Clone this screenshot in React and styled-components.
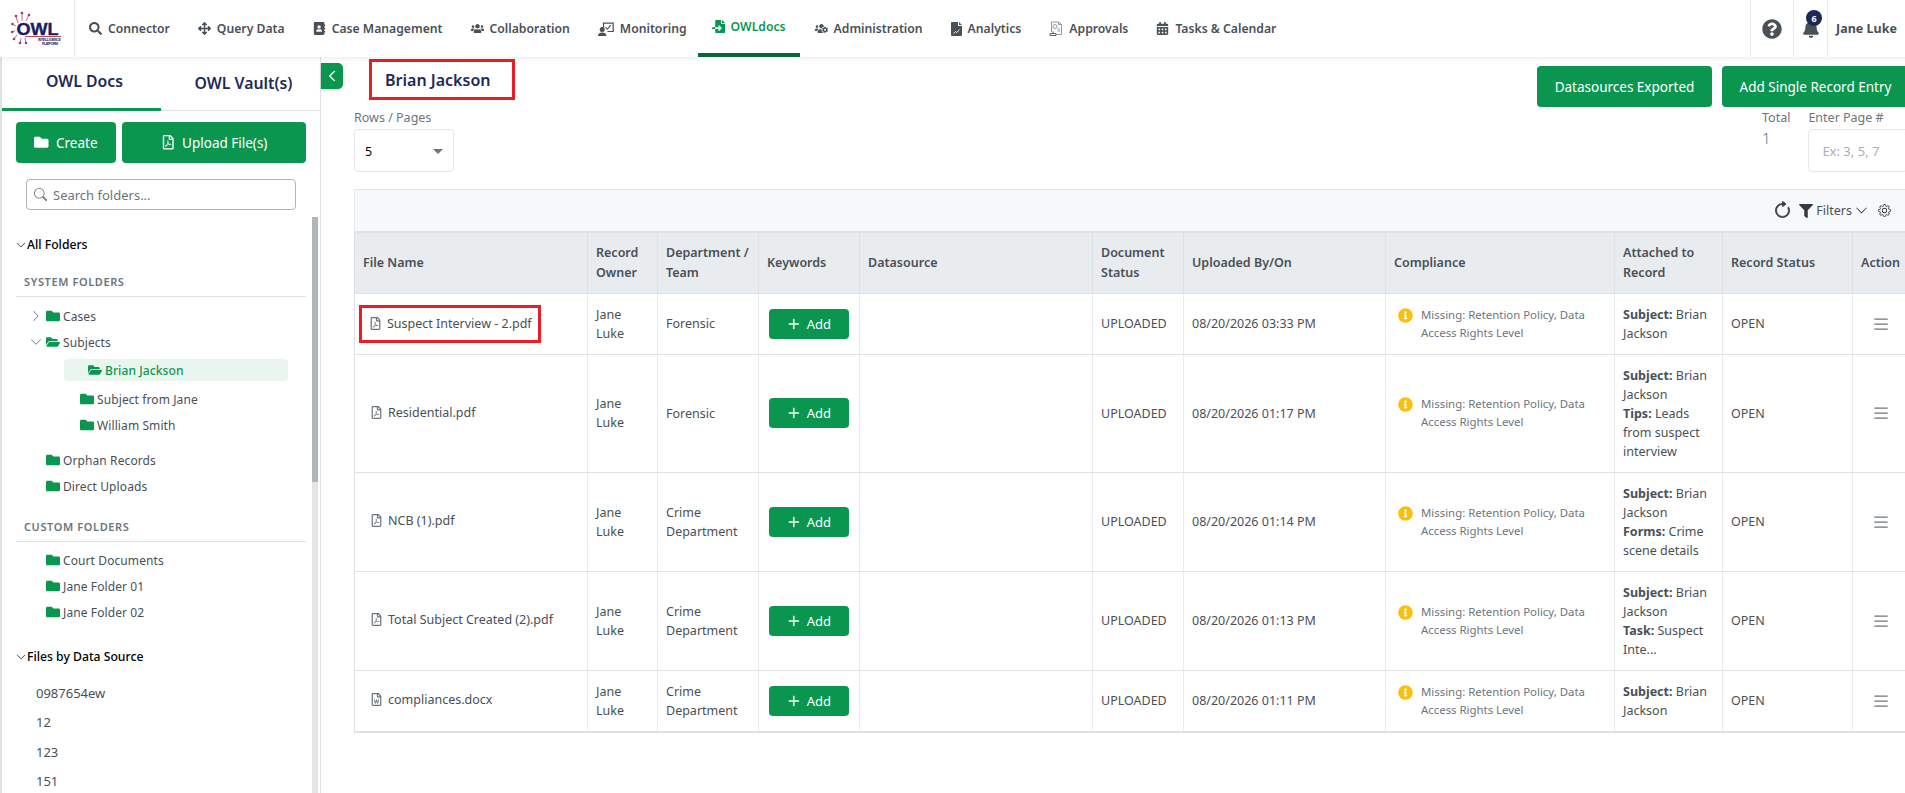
import React from 'react';
import styled, { createGlobalStyle } from 'styled-components';
import {
  FaAddressBook,
  FaArrowsAlt,
  FaBell,
  FaCalendarAlt,
  FaFileImport,
  FaFilter,
  FaFolder,
  FaFolderOpen,
  FaInfoCircle,
  FaQuestionCircle,
  FaRegFilePdf,
  FaRegFileWord,
  FaSearch,
  FaUsers,
  FaUsersCog,
} from 'react-icons/fa';
import { BsArrowClockwise, BsChevronDown, BsChevronLeft, BsChevronRight, BsGear, BsList, BsPlusLg, BsSearch } from 'react-icons/bs';

const GREEN = '#0b9650';
const NAVY = '#1c2a5a';
const FONT = '"Noto Sans", "Open Sans", sans-serif';

const GlobalStyle = createGlobalStyle`
  html, body {
    margin: 0;
    padding: 0;
    height: 100%;
    overflow: hidden;
    background: #fff;
  }
  body {
    font-family: ${FONT};
    font-size: 13px;
    color: #495057;
  }
  * { box-sizing: border-box; }
`;

const Page = styled.div`
  width: 1909px;
  height: 793px;
  display: flex;
  flex-direction: column;
  overflow: hidden;
`;

const Header = styled.header`
  height: 57px;
  flex: none;
  display: flex;
  align-items: stretch;
  background: #fff;
  box-shadow: 0 2px 6px rgba(0, 0, 0, 0.07);
  position: relative;
  z-index: 2;
  padding-right: 4px;
`;

const LogoCell = styled.div`
  width: 75px;
  flex: none;
  border-right: 1px solid #e9ebee;
  display: flex;
  align-items: center;
  justify-content: center;
`;

const Nav = styled.nav`
  flex: 1;
  display: flex;
`;

const NavItem = styled.a`
  display: flex;
  align-items: center;
  gap: 6px;
  padding: ${(p) => (p.$active ? '0 14px 0' : '4px 14px 0')};
  margin: ${(p) => (p.$active ? '0 1px 0 -3px' : '0')};
  font-size: 12.2px;
  font-weight: 600;
  white-space: nowrap;
  color: ${(p) => (p.$active ? GREEN : '#495057')};
  border-bottom: 4px solid ${(p) => (p.$active ? '#08663a' : 'transparent')};
  svg {
    font-size: 13px;
    flex: none;
  }
`;

const HeaderCell = styled.div`
  border-left: 1px solid #e9ebee;
  display: flex;
  align-items: center;
  justify-content: center;
  width: ${(p) => p.$w}px;
  position: relative;
  color: #495057;
  font-size: 12.5px;
  font-weight: 700;
  white-space: nowrap;
`;

const Badge = styled.span`
  position: absolute;
  left: 12px;
  top: 10px;
  width: 16px;
  height: 16px;
  border-radius: 50%;
  background: ${NAVY};
  color: #fff;
  font-size: 9px;
  font-weight: 700;
  display: flex;
  align-items: center;
  justify-content: center;
`;

const Body = styled.div`
  flex: 1;
  min-height: 0;
  display: flex;
`;

const Sidebar = styled.aside`
  width: 321px;
  flex: none;
  display: flex;
  flex-direction: column;
  border-left: 2px solid #dee2e6;
  border-right: 1px solid #dee2e6;
  overflow: hidden;
`;

const Tabs = styled.div`
  height: 54px;
  flex: none;
  display: flex;
  border-bottom: 1px solid #dee2e6;
`;

const Tab = styled.div`
  flex: 1;
  display: flex;
  align-items: center;
  justify-content: center;
  font-size: 15.8px;
  font-weight: 600;
  color: ${NAVY};
  border-bottom: ${(p) => (p.$active ? `3px solid ${GREEN}` : 'none')};
  margin-bottom: -1px;
  padding: 0 0 3px 6px;
`;

const SideActions = styled.div`
  display: flex;
  gap: 6px;
  padding: 11px 14px 0;
`;

const GreenButton = styled.button`
  border: none;
  border-radius: 4px;
  background: ${GREEN};
  color: #fff;
  font-family: ${FONT};
  font-size: 13.5px;
  display: flex;
  align-items: center;
  justify-content: center;
  gap: 7px;
  height: ${(p) => p.$h || 41}px;
  width: ${(p) => (p.$w ? `${p.$w}px` : 'auto')};
  padding: ${(p) => (p.$w ? '0' : '0 18px')};
  flex: none;
  white-space: nowrap;
  svg { font-size: 14.5px; }
`;

const SearchWrap = styled.div`
  margin: 16px 0 0 24px;
  width: 270px;
  height: 31px;
  flex: none;
  border: 1px solid #adb5bd;
  border-radius: 4px;
  display: flex;
  align-items: center;
  gap: 6px;
  padding-left: 7px;
  font-size: 13px;
  color: #6c757d;
`;

const SideScroll = styled.div`
  flex: 1;
  min-height: 0;
  display: flex;
  margin-top: 7px;
`;

const SideTree = styled.div`
  flex: 1;
  padding: 18px 6px 0 14px;
  overflow: hidden;
`;

const ScrollTrack = styled.div`
  width: 6px;
  flex: none;
  margin-right: 2px;
  background: #e4e6e6;
`;

const ScrollThumb = styled.div`
  height: 265px;
  background: #adb5bd;
`;

const TreeHeading = styled.div`
  display: flex;
  align-items: center;
  gap: 1px;
  height: 19px;
  margin-top: ${(p) => p.$mt || 0}px;
  font-size: 12.2px;
  font-weight: 500;
  color: #000;
  svg { font-size: 10px; }
`;

const SectionLabel = styled.div`
  margin-top: ${(p) => p.$mt}px;
  padding: 0 0 7px 8px;
  border-bottom: 1px solid #dee2e6;
  font-size: 11px;
  font-weight: 600;
  letter-spacing: 0.6px;
  color: #6c757d;
`;

const TreeRow = styled.div`
  display: flex;
  align-items: center;
  height: ${(p) => p.$h || 26}px;
  margin-left: ${(p) => p.$indent}px;
  margin-top: ${(p) => p.$mt || 0}px;
  font-size: 12px;
  letter-spacing: 0.1px;
  color: #495057;
  gap: 3px;
  svg.folder { color: ${GREEN}; font-size: 14px; flex: none; }
`;

const Caret = styled.span`
  width: 14px;
  margin-left: -17px;
  display: flex;
  justify-content: center;
  color: #6c757d;
  font-size: 12px;
`;

const SelectedRow = styled.div`
  display: flex;
  align-items: center;
  gap: 3px;
  height: 22px;
  margin: 4px 18px 5px 48px;
  padding-left: 24px;
  border-radius: 4px;
  background: #ebf5ef;
  color: ${GREEN};
  font-size: 12px;
  font-weight: 500;
  letter-spacing: 0.1px;
  svg { font-size: 14px; }
`;

const SourceList = styled.div`
  margin-top: 12px;
`;

const SourceRow = styled.div`
  height: 29.5px;
  display: flex;
  align-items: center;
  padding-left: 20px;
  font-size: 13px;
  color: #495057;
`;

const Main = styled.main`
  flex: 1;
  min-width: 0;
  position: relative;
  padding-left: 33px;
`;

const CollapseTab = styled.div`
  position: absolute;
  left: 0;
  top: 6px;
  width: 22px;
  height: 26px;
  border-radius: 0 5px 5px 0;
  background: ${GREEN};
  color: #fff;
  box-shadow: 0 1px 3px rgba(0, 0, 0, 0.2);
  display: flex;
  align-items: center;
  justify-content: center;
  font-size: 12px;
  svg { stroke: #fff; stroke-width: 1.2px; }
`;

const TopRow = styled.div`
  display: flex;
  justify-content: space-between;
  align-items: flex-start;
  padding-top: 2px;
`;

const TitleBox = styled.div`
  margin-left: 15px;
  width: 146px;
  height: 41px;
  border: 3px solid #ed1c24;
  display: flex;
  align-items: center;
  padding-left: 13px;
  font-size: 16px;
  font-weight: 600;
  color: ${NAVY};
`;

const TopActions = styled.div`
  display: flex;
  gap: 10px;
  margin-top: 7px;
`;

const ControlsRow = styled.div`
  display: flex;
  margin-top: 1px;
`;

const Field = styled.div`
  display: flex;
  flex-direction: column;
  margin-left: ${(p) => p.$ml || 0}px;
  font-size: 12.5px;
  color: #6c757d;
`;

const FieldLabel = styled.label`
  height: 19px;
  margin-bottom: 2px;
  line-height: 19px;
`;

const SelectBox = styled.div`
  width: 100px;
  height: 43px;
  border: 1px solid #e4e6ea;
  border-radius: 4px;
  display: flex;
  align-items: center;
  justify-content: space-between;
  padding: 2px 10px 0;
  color: #000;
  font-size: 12.5px;
`;

const SelectArrow = styled.span`
  width: 0;
  height: 0;
  border-left: 5px solid transparent;
  border-right: 5px solid transparent;
  border-top: 5px solid #6c757d;
`;

const TotalValue = styled.div`
  font-size: 15px;
  font-weight: 300;
  color: #4a7ba6;
  line-height: 19px;
`;

const PageInput = styled.div`
  width: 100px;
  height: 43px;
  border: 1px solid #e4e6ea;
  border-radius: 4px;
  display: flex;
  align-items: center;
  padding-left: 13px;
  color: #a9afb5;
  font-size: 13px;
  white-space: nowrap;
`;

const Toolbar = styled.div`
  margin-top: 17px;
  height: 42px;
  background: #f7f8fa;
  border-top: 1px solid #dee2e6;
  border-left: 1px solid #e9ebee;
  display: flex;
  align-items: center;
  justify-content: flex-end;
  padding-right: 18px;
  font-size: 12.5px;
  color: #495057;
`;

const ToolIcon = styled.span`
  display: flex;
  margin-left: ${(p) => p.$ml || 0}px;
  font-size: ${(p) => p.$size}px;
  color: #343a40;
  svg { stroke: currentColor; stroke-width: ${(p) => p.$bold || 0}px; }
`;

const FilterLabel = styled.span`
  margin-left: 3px;
`;

const Table = styled.table`
  width: 1555px;
  table-layout: fixed;
  border-collapse: collapse;
  border-top: 2px solid #dee2e6;
  border-bottom: 2px solid #dee2e6;
  border-left: 1px solid #dee2e6;
`;

const Th = styled.th`
  height: 61px;
  padding: 0 8px;
  background: #e9ecef;
  border-right: 1px solid #dee2e6;
  border-bottom: 1px solid #dee2e6;
  text-align: left;
  font-size: 12.5px;
  font-weight: 600;
  line-height: 20px;
  color: #495057;
`;

const Td = styled.td`
  padding: 11px 8px;
  border-right: 1px solid #e9ebee;
  border-bottom: 1px solid #dee2e6;
  font-size: 12.5px;
  line-height: 19px;
  color: #495057;
  vertical-align: middle;
`;

const ActionCell = styled(Td)`
  text-align: center;
  font-size: 20px;
  padding: 0;
  color: #6c757d;
  svg { display: block; margin: 0 auto; }
`;

const FileCell = styled.div`
  display: inline-flex;
  align-items: center;
  gap: 5px;
  height: ${(p) => (p.$marked ? '38px' : 'auto')};
  width: ${(p) => (p.$marked ? '182px' : 'auto')};
  margin-left: ${(p) => (p.$marked ? '-4px' : '0')};
  padding-left: ${(p) => (p.$marked ? '10px' : '7px')};
  outline: ${(p) => (p.$marked ? '3px solid #ed1c24' : 'none')};
  outline-offset: -3px;
  white-space: nowrap;
  svg { color: #6c757d; font-size: 13px; flex: none; }
`;

const AddButton = styled(GreenButton)`
  width: 80px;
  height: 30px;
  margin-left: 2px;
  gap: 6px;
  font-size: 13px;
  svg { font-size: 16px; stroke: #fff; stroke-width: 0.6px; }
`;

const ComplianceCell = styled.div`
  display: flex;
  gap: 8px;
  padding-left: 4px;
  font-size: 11.4px;
  line-height: 18px;
  color: #6c757d;
  svg { color: #f9bf0a; font-size: 15px; flex: none; margin-top: 2px; }
`;

const Strong = styled.b`
  font-weight: 700;
`;

const COLUMNS = [
  ['File Name', 233],
  ['Record Owner', 70],
  ['Department / Team', 101],
  ['Keywords', 101],
  ['Datasource', 233],
  ['Document Status', 91],
  ['Uploaded By/On', 202],
  ['Compliance', 229],
  ['Attached to Record', 108],
  ['Record Status', 130],
  ['Action', 57],
];

const ROWS = [
  { file: 'Suspect Interview - 2.pdf', dept: 'Forensic', time: '03:33 PM', marked: true, attached: null },
  { file: 'Residential.pdf', dept: 'Forensic', time: '01:17 PM', attached: ['Tips:', ' Leads from suspect interview'] },
  { file: 'NCB (1).pdf', dept: 'Crime Department', time: '01:14 PM', attached: ['Forms:', ' Crime scene details'] },
  { file: 'Total Subject Created (2).pdf', dept: 'Crime Department', time: '01:13 PM', attached: ['Task:', ' Suspect Inte...'] },
  { file: 'compliances.docx', dept: 'Crime Department', time: '01:11 PM', word: true, attached: null },
];

const OwlLogo = () => (
  <svg width="52" height="38" viewBox="0 0 52 38">
    <g stroke="#b8456b" strokeWidth="0.8" fill="none">
      <path d="M7 13 L5 7 M11 11 L11 3 M15 11 L18 5 M5 16 L1 14 M4 21 L0 22 M6 25 L3 29 M10 28 L9 33 M14 28 L15 33" />
    </g>
    <g fill="#a8327a">
      <circle cx="5" cy="6" r="1.3" />
      <circle cx="11" cy="3" r="1.3" />
      <circle cx="18" cy="5" r="1.3" />
      <circle cx="1.5" cy="14" r="1.3" />
      <circle cx="1.2" cy="22" r="1.3" />
      <circle cx="3" cy="29" r="1.3" />
      <circle cx="9" cy="33" r="1.3" />
      <circle cx="15" cy="33" r="1.3" />
    </g>
    <text x="5.5" y="24.5" fontFamily='"Liberation Sans", sans-serif' fontWeight="700" fontSize="16.5" fill="#1c1f5e" stroke="#1c1f5e" strokeWidth="0.4" textLength="42" lengthAdjust="spacingAndGlyphs">OWL</text>
    <path d="M14 26.5 H50" stroke="#c2455e" strokeWidth="1" />
    <text x="27" y="31" fontFamily='"Liberation Sans", sans-serif' fontSize="3.6" fontWeight="700" fill="#1c1f5e" textLength="23">INTELLIGENCE</text>
    <text x="31" y="35" fontFamily='"Liberation Sans", sans-serif' fontSize="3.6" fontWeight="700" fill="#1c1f5e" textLength="16">PLATFORM</text>
  </svg>
);

const MonitoringIcon = () => (
  <svg width="16" height="14" viewBox="0 0 16 14">
    <path d="M5.5 6.5 V1.2 H15.2 V9.5 H9.5" fill="none" stroke="currentColor" strokeWidth="1.2" />
    <path d="M7.5 5.5 L9.5 7 L12.8 3.2" fill="none" stroke="currentColor" strokeWidth="1.1" />
    <circle cx="4.2" cy="7.6" r="2.5" fill="currentColor" />
    <path d="M0 14 C0 11.4 1.8 10.4 4.2 10.4 C6.6 10.4 8.4 11.4 8.4 14 Z" fill="currentColor" />
  </svg>
);

const AnalyticsIcon = () => (
  <svg width="11" height="14" viewBox="0 0 11 14">
    <path d="M1 0 H7 V4 H11 V13 A1 1 0 0 1 10 14 H1 A1 1 0 0 1 0 13 V1 A1 1 0 0 1 1 0 Z M8 0 L11 3 H8 Z" fill="currentColor" />
    <path d="M2.5 11.5 L4.5 9.5 L5.8 10.6 L8.4 7.6" fill="none" stroke="#fff" strokeWidth="0.9" />
  </svg>
);

const ApprovalsIcon = () => (
  <svg width="14" height="15" viewBox="0 0 14 15" fill="none" stroke="#868e96" strokeWidth="0.9">
    <path d="M2.5 11 V1 H9.5 L12.5 3.5 V13.5 H7" />
    <circle cx="6" cy="5.5" r="2" />
    <path d="M8.5 8 H11 M8.5 10 H11 M9.5 1 V3.5 H12.5" />
    <path d="M1 14.5 V12.5 H7 V14.5 Z M4 10.5 V12.5" stroke="#495057" />
  </svg>
);

const NAV = [
  [FaSearch, 'Connector'],
  [FaArrowsAlt, 'Query Data'],
  [FaAddressBook, 'Case Management'],
  [FaUsers, 'Collaboration'],
  [MonitoringIcon, 'Monitoring'],
  [FaFileImport, 'OWLdocs', true],
  [FaUsersCog, 'Administration'],
  [AnalyticsIcon, 'Analytics'],
  [ApprovalsIcon, 'Approvals'],
  [FaCalendarAlt, 'Tasks & Calendar'],
];

const App = () => (
  <Page>
    <GlobalStyle />
    <Header>
      <LogoCell>
        <OwlLogo />
      </LogoCell>
      <Nav>
        {NAV.map(([Icon, label, active]) => (
          <NavItem key={label} $active={active}>
            <Icon />
            {label}
          </NavItem>
        ))}
      </Nav>
      <HeaderCell $w={43}>
        <FaQuestionCircle size={20} />
      </HeaderCell>
      <HeaderCell $w={34}>
        <FaBell size={18} />
        <Badge>6</Badge>
      </HeaderCell>
      <HeaderCell $w={78}>Jane Luke</HeaderCell>
    </Header>
    <Body>
      <Sidebar>
        <Tabs>
          <Tab $active>OWL Docs</Tab>
          <Tab>OWL Vault(s)</Tab>
        </Tabs>
        <SideActions>
          <GreenButton $w={100}>
            <FaFolder />
            Create
          </GreenButton>
          <GreenButton $w={184}>
            <FaRegFilePdf />
            Upload File(s)
          </GreenButton>
        </SideActions>
        <SearchWrap>
          <BsSearch size={13} />
          Search folders...
        </SearchWrap>
        <SideScroll>
          <SideTree>
            <TreeHeading>
              <BsChevronDown />
              All Folders
            </TreeHeading>
            <SectionLabel $mt={20}>SYSTEM FOLDERS</SectionLabel>
            <TreeRow $indent={30} $mt={6}>
              <Caret><BsChevronRight /></Caret>
              <FaFolder className="folder" />
              Cases
            </TreeRow>
            <TreeRow $indent={30}>
              <Caret><BsChevronDown /></Caret>
              <FaFolderOpen className="folder" />
              Subjects
            </TreeRow>
            <SelectedRow>
              <FaFolderOpen />
              Brian Jackson
            </SelectedRow>
            <TreeRow $indent={64}>
              <FaFolder className="folder" />
              Subject from Jane
            </TreeRow>
            <TreeRow $indent={64}>
              <FaFolder className="folder" />
              William Smith
            </TreeRow>
            <TreeRow $indent={30} $mt={9}>
              <FaFolder className="folder" />
              Orphan Records
            </TreeRow>
            <TreeRow $indent={30}>
              <FaFolder className="folder" />
              Direct Uploads
            </TreeRow>
            <SectionLabel $mt={20}>CUSTOM FOLDERS</SectionLabel>
            <TreeRow $indent={30} $mt={5}>
              <FaFolder className="folder" />
              Court Documents
            </TreeRow>
            <TreeRow $indent={30}>
              <FaFolder className="folder" />
              Jane Folder 01
            </TreeRow>
            <TreeRow $indent={30}>
              <FaFolder className="folder" />
              Jane Folder 02
            </TreeRow>
            <TreeHeading $mt={22}>
              <BsChevronDown />
              Files by Data Source
            </TreeHeading>
            <SourceList>
              <SourceRow>0987654ew</SourceRow>
              <SourceRow>12</SourceRow>
              <SourceRow>123</SourceRow>
              <SourceRow>151</SourceRow>
            </SourceList>
          </SideTree>
          <ScrollTrack>
            <ScrollThumb />
          </ScrollTrack>
        </SideScroll>
      </Sidebar>
      <Main>
        <CollapseTab>
          <BsChevronLeft />
        </CollapseTab>
        <TopRow>
          <TitleBox>Brian Jackson</TitleBox>
          <TopActions>
            <GreenButton $w={175}>Datasources Exported</GreenButton>
            <GreenButton $w={187}>Add Single Record Entry</GreenButton>
          </TopActions>
        </TopRow>
        <ControlsRow>
          <Field>
            <FieldLabel>Rows / Pages</FieldLabel>
            <SelectBox>
              5
              <SelectArrow />
            </SelectBox>
          </Field>
          <Field $ml={1308}>
            <FieldLabel>Total</FieldLabel>
            <TotalValue>1</TotalValue>
          </Field>
          <Field $ml={18}>
            <FieldLabel>Enter Page #</FieldLabel>
            <PageInput>Ex: 3, 5, 7</PageInput>
          </Field>
        </ControlsRow>
        <Toolbar>
          <ToolIcon $size={19} $bold={0.6}><BsArrowClockwise /></ToolIcon>
          <ToolIcon $size={14} $ml={7}><FaFilter /></ToolIcon>
          <FilterLabel>Filters</FilterLabel>
          <ToolIcon $size={13} $ml={3}><BsChevronDown /></ToolIcon>
          <ToolIcon $size={13} $ml={10}><BsGear /></ToolIcon>
        </Toolbar>
        <Table>
          <colgroup>
            {COLUMNS.map(([name, width]) => (
              <col key={name} width={width} />
            ))}
          </colgroup>
          <thead>
            <tr>
              {COLUMNS.map(([name]) => (
                <Th key={name}>{name}</Th>
              ))}
            </tr>
          </thead>
          <tbody>
            {ROWS.map((row) => (
              <tr key={row.file}>
                <Td>
                  <FileCell $marked={row.marked}>
                    {row.word ? <FaRegFileWord /> : <FaRegFilePdf />}
                    {row.file}
                  </FileCell>
                </Td>
                <Td>Jane Luke</Td>
                <Td>{row.dept}</Td>
                <Td>
                  <AddButton>
                    <BsPlusLg />
                    Add
                  </AddButton>
                </Td>
                <Td />
                <Td>UPLOADED</Td>
                <Td>08/20/2026 {row.time}</Td>
                <Td>
                  <ComplianceCell>
                    <FaInfoCircle />
                    <span>Missing: Retention Policy, Data Access Rights Level</span>
                  </ComplianceCell>
                </Td>
                <Td>
                  <Strong>Subject:</Strong> Brian Jackson
                  {row.attached && (
                    <>
                      <br />
                      <Strong>{row.attached[0]}</Strong>
                      {row.attached[1]}
                    </>
                  )}
                </Td>
                <Td>OPEN</Td>
                <ActionCell>
                  <BsList />
                </ActionCell>
              </tr>
            ))}
          </tbody>
        </Table>
      </Main>
    </Body>
  </Page>
);

export default App;
